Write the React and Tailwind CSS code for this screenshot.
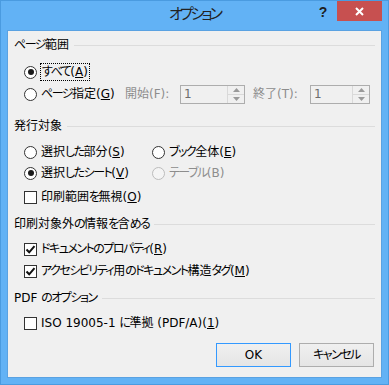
import React from "react";

// kana runs get tighter spacing so they read like Meiryo UI's narrow kana
const J = ({ t, tight = "tracking-[-1.5px]" }) =>
  t.split(/([\u3040-\u30ff]+)/).map((part, i) =>
    /[\u3040-\u30ff]/.test(part) ? (
      <span key={i} className={tight}>
        {part}
      </span>
    ) : (
      <React.Fragment key={i}>{part}</React.Fragment>
    )
  );

const Label = ({ t, k, className = "" }) => (
  <span className={`ml-[4px] ${className}`}>
    <J t={t} />(<u>{k}</u>)
  </span>
);

const Radio = ({ checked, disabled }) => (
  <span
    className={`flex items-center justify-center w-[13px] h-[13px] rounded-full border shrink-0 ${
      disabled ? "border-[#bcbcbc] bg-[#f4f4f4]" : "border-[#333] bg-white"
    }`}
  >
    {checked && <span className="w-[6px] h-[6px] rounded-full bg-[#1a1a1a]" />}
  </span>
);

const Check = ({ checked }) => (
  <span className="flex items-center justify-center w-[13px] h-[13px] border border-[#333] bg-white shrink-0">
    {checked && (
      <svg width="11" height="11" viewBox="0 0 11 11">
        <path d="M1.5 5.5 L4.2 8.3 L9.5 2.2" fill="none" stroke="#111" strokeWidth="2" />
      </svg>
    )}
  </span>
);

const Header = ({ t, className = "" }) => (
  <div className={`flex items-center h-[20px] ${className}`}>
    <span>
      <J t={t} />
    </span>
    <div className="flex-1 h-px bg-[#dcdcdc] ml-[5px] mr-[6px]" />
  </div>
);

const Spin = ({ w }) => (
  <div className={`flex h-[19px] border border-[#adadad] bg-[#f0f0f0] ${w}`}>
    <span className="flex-1 pl-[3px] text-[#6d6d6d] leading-[17px]">1</span>
    <div className="flex flex-col w-[17px] border-l border-[#d9d9d9]">
      <div className="flex-1 flex items-center justify-center border-b border-[#d9d9d9]">
        <svg width="7" height="4" viewBox="0 0 7 4"><path d="M0 4 L3.5 0 L7 4Z" fill="#9a9a9a" /></svg>
      </div>
      <div className="flex-1 flex items-center justify-center">
        <svg width="7" height="4" viewBox="0 0 7 4"><path d="M0 0 L3.5 4 L7 0Z" fill="#9a9a9a" /></svg>
      </div>
    </div>
  </div>
);

export default function App() {
  return (
    <div className="w-[389px] h-[385px] bg-[#62b2f5] border border-[#4a9be0] flex flex-col font-['DejaVu_Sans','Noto_Sans_CJK_JP',sans-serif] [font-feature-settings:'palt'] text-[12px] text-black leading-none select-none">
      <div className="h-[30px] flex items-start">
        <div className="flex-1" />
        <div className="pt-[6px] text-[15px] text-[#222]">
          <J t="オプション" tight="tracking-[-3px]" />
        </div>
        <div className="flex-1 flex justify-end items-start">
          <span className="w-[16px] pt-[4px] text-center text-[14px] font-bold text-[#1e1e1e] font-['Liberation_Sans',sans-serif] mr-[6px]">?</span>
          <div className="w-[45px] h-[20px] bg-[#c75050] flex items-center justify-center mr-[6px]">
            <svg width="9" height="9" viewBox="0 0 9 9">
              <path d="M1 1 L8 8 M8 1 L1 8" stroke="#fff" strokeWidth="2" />
            </svg>
          </div>
        </div>
      </div>

      <div className="mx-[7px] h-[346px] bg-[#f0f0f0] shadow-[0_0_0_1px_#5aa2e2] flex flex-col pl-[6px]">
        <Header className="mt-[4px]" t="ページ範囲" />

        <div className="ml-[10px] mt-[7px] h-[20px] flex items-center">
          <Radio checked />
          <span className="ml-[3px] px-[1px] py-[2px] border border-dotted border-black">
            <J t="すべて" />(<u>A</u>)
          </span>
        </div>

        <div className="ml-[10px] mt-[2px] h-[20px] flex items-center">
          <div className="w-[101px] flex items-center">
            <Radio />
            <Label t="ページ指定" k="G" />
          </div>
          <span className="w-[55px] text-[#8d8d8d]">開始(F):</span>
          <Spin w="w-[65px]" />
          <span className="ml-[8px] w-[57px] text-[#8d8d8d]">終了(T):</span>
          <Spin w="w-[60px]" />
        </div>

        <Header className="mt-[12px]" t="発行対象" />

        <div className="ml-[10px] mt-[6px] h-[20px] flex items-center">
          <div className="w-[128px] flex items-center">
            <Radio />
            <Label t="選択した部分" k="S" />
          </div>
          <Radio />
          <Label t="ブック全体" k="E" />
        </div>

        <div className="ml-[10px] mt-[1px] h-[20px] flex items-center">
          <div className="w-[128px] flex items-center">
            <Radio checked />
            <Label t="選択したシート" k="V" />
          </div>
          <Radio disabled />
          <span className="ml-[4px] text-[#8d8d8d]">
            <J t="テーブル" />(B)
          </span>
        </div>

        <div className="ml-[10px] mt-[4px] h-[20px] flex items-center">
          <Check />
          <Label t="印刷範囲を無視" k="O" />
        </div>

        <Header className="mt-[7px]" t="印刷対象外の情報を含める" />

        <div className="ml-[10px] mt-[5px] h-[20px] flex items-center">
          <Check checked />
          <Label t="ドキュメントのプロパティ" k="R" />
        </div>

        <div className="ml-[10px] mt-[2px] h-[20px] flex items-center">
          <Check checked />
          <Label t="アクセシビリティ用のドキュメント構造タグ" k="M" />
        </div>

        <Header className="mt-[7px]" t="PDF のオプション" />

        <div className="ml-[10px] mt-[5px] h-[20px] flex items-center">
          <Check />
          <Label t="ISO 19005-1 に準拠 (PDF/A)" k="1" />
        </div>

        <div className="mt-[10px] flex justify-end gap-[8px] mr-[7px]">
          <button className="w-[75px] h-[24px] border border-[#3399ff] bg-[linear-gradient(#f0f0f0,#e5e5e5)]">OK</button>
          <button className="w-[75px] h-[24px] border border-[#adadad] bg-[linear-gradient(#f0f0f0,#e5e5e5)]">
            <J t="キャンセル" />
          </button>
        </div>
      </div>
    </div>
  );
}
